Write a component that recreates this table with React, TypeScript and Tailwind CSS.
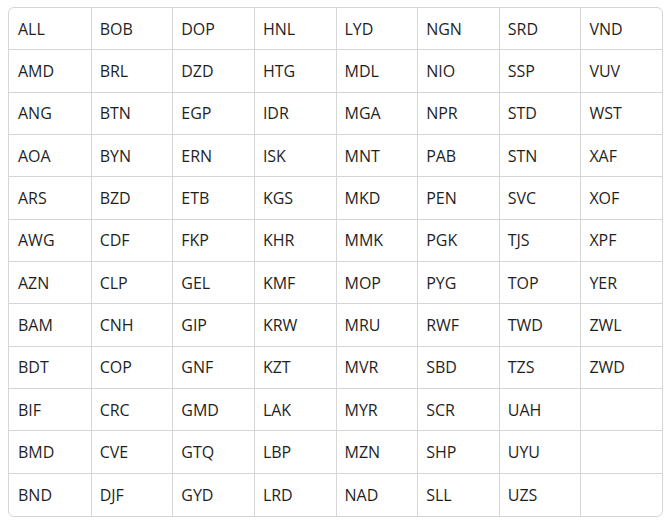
import React from "react";

const cols: string[][] = [
  ["ALL", "AMD", "ANG", "AOA", "ARS", "AWG", "AZN", "BAM", "BDT", "BIF", "BMD", "BND"],
  ["BOB", "BRL", "BTN", "BYN", "BZD", "CDF", "CLP", "CNH", "COP", "CRC", "CVE", "DJF"],
  ["DOP", "DZD", "EGP", "ERN", "ETB", "FKP", "GEL", "GIP", "GNF", "GMD", "GTQ", "GYD"],
  ["HNL", "HTG", "IDR", "ISK", "KGS", "KHR", "KMF", "KRW", "KZT", "LAK", "LBP", "LRD"],
  ["LYD", "MDL", "MGA", "MNT", "MKD", "MMK", "MOP", "MRU", "MVR", "MYR", "MZN", "NAD"],
  ["NGN", "NIO", "NPR", "PAB", "PEN", "PGK", "PYG", "RWF", "SBD", "SCR", "SHP", "SLL"],
  ["SRD", "SSP", "STD", "STN", "SVC", "TJS", "TOP", "TWD", "TZS", "UAH", "UYU", "UZS"],
  ["VND", "VUV", "WST", "XAF", "XOF", "XPF", "YER", "ZWL", "ZWD", "", "", ""],
];

export default function App() {
  const rows = 12;
  const cells: React.ReactNode[] = [];
  for (let r = 0; r < rows; r++) {
    for (let c = 0; c < 8; c++) {
      const firstCol = c === 0;
      const lastRow = r === rows - 1;
      cells.push(
        <div
          key={`${r}-${c}`}
          className={`flex items-center ${firstCol ? "pl-[9px]" : "pl-[8px]"} text-[16px] text-[#1f1f1f] ${firstCol ? "" : "border-l"} ${lastRow ? "" : "border-b"} border-[#d6d6d6]`}
        >
          {cols[c][r]}
        </div>
      );
    }
  }
  return (
    <div className="w-[670px] h-[529px] bg-white pt-[7px] pl-[8px]" style={{ fontFamily: "'Open Sans', sans-serif" }}>
      <div className="w-[655px] h-[510px] border border-[#d6d6d6] rounded-[6px] overflow-hidden grid grid-cols-8 grid-rows-12">
        {cells}
      </div>
    </div>
  );
}
